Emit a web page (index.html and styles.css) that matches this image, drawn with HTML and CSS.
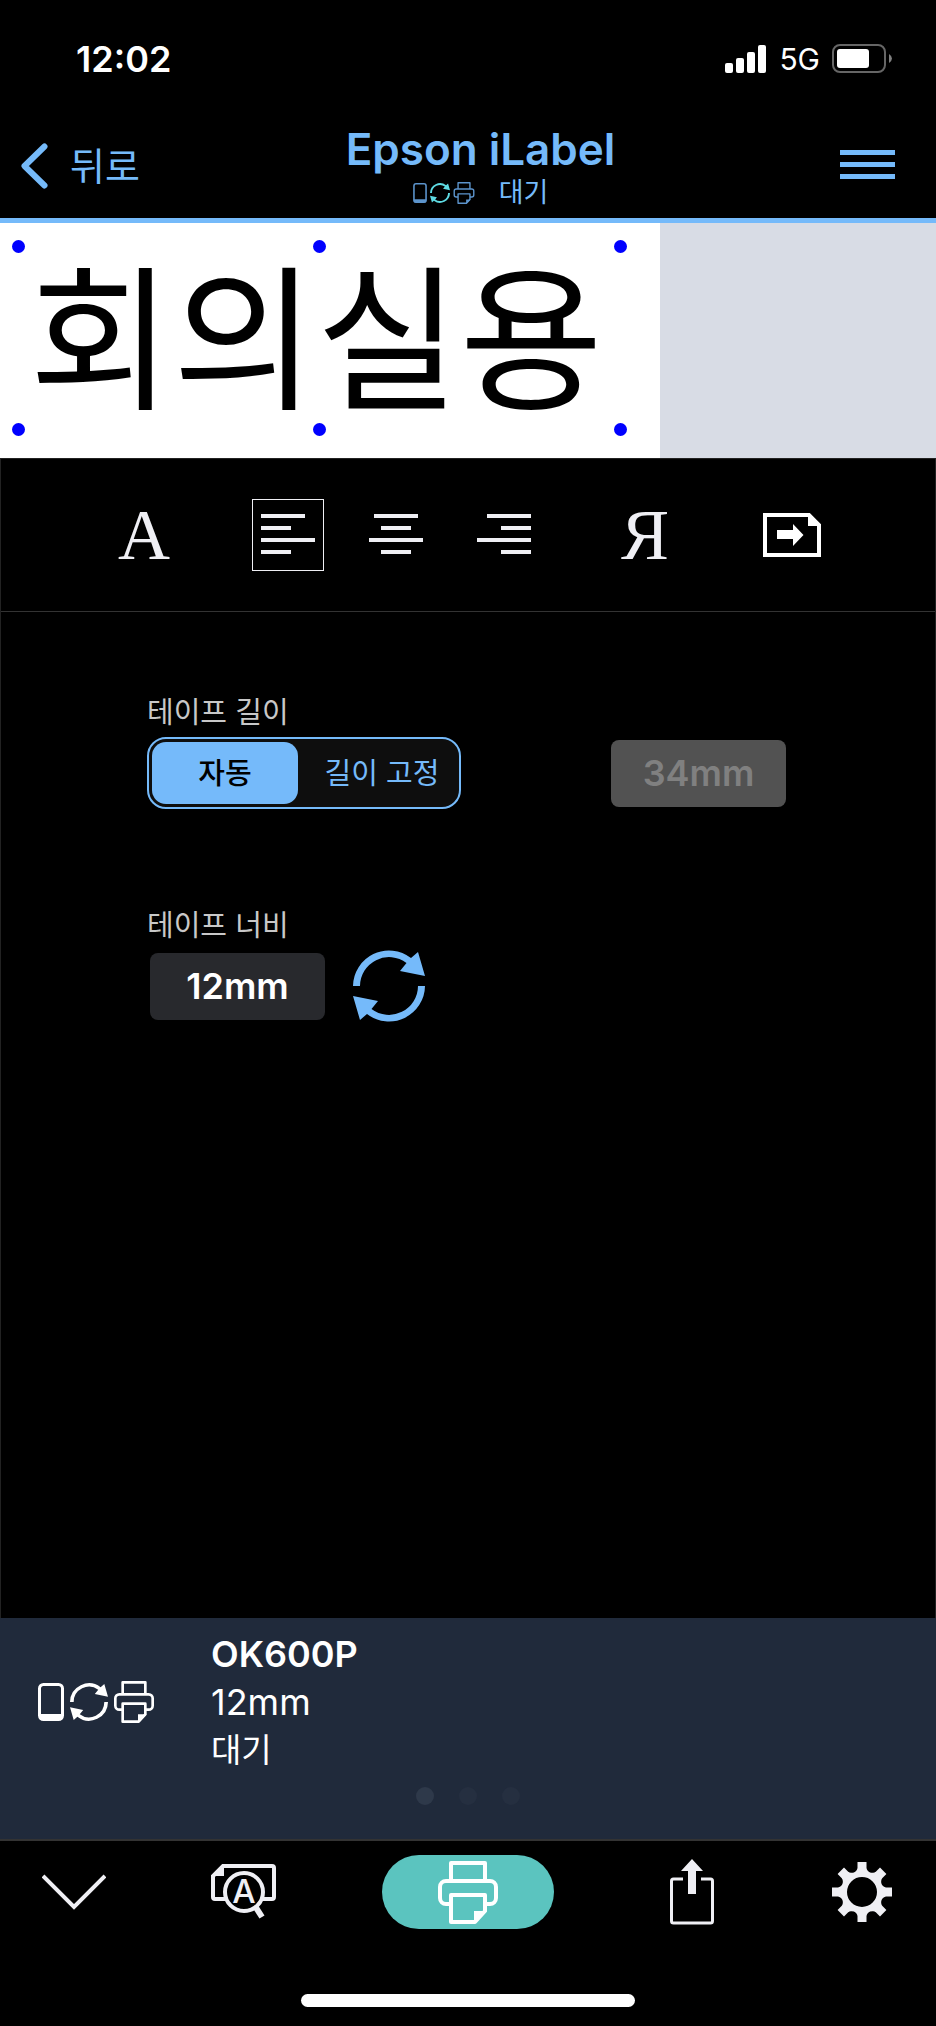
FILE: index.html
```html
<!DOCTYPE html>
<html lang="ko">
<head>
<meta charset="utf-8">
<meta name="viewport" content="width=device-width, initial-scale=1">
<title>Epson iLabel</title>
<link rel="stylesheet" href="styles.css">
</head>
<body>
<svg class="defs" aria-hidden="true">
  <symbol id="sync" viewBox="0 0 72 72">
    <path fill="currentColor" d="M0 36A36 36 0 0 1 58 8L65 2L72 26L47 21L53.5 13A29 29 0 0 0 7 36Z"/>
    <path fill="currentColor" transform="rotate(180 36 36)" d="M0 36A36 36 0 0 1 58 8L65 2L72 26L47 21L53.5 13A29 29 0 0 0 7 36Z"/>
  </symbol>
  <symbol id="printer" viewBox="0 0 60 63">
    <g fill="none" stroke="currentColor" stroke-width="4" stroke-linejoin="round">
      <path d="M13 20V2H47V20"/>
      <path d="M13 43H8a6 6 0 0 1-6-6V26a6 6 0 0 1 6-6H52a6 6 0 0 1 6 6V37a6 6 0 0 1-6 6H47"/>
      <path d="M13 34H47V50L37 61H13Z"/>
    </g>
    <path fill="currentColor" d="M36 50H49L36 63Z"/>
  </symbol>
  <symbol id="phone" viewBox="0 0 26 38">
    <rect x="1.500" y="1.500" width="23" height="35" rx="4" fill="none" stroke="currentColor" stroke-width="3"/>
    <path fill="currentColor" d="M1 31H25V34Q25 37 22 37H4Q1 37 1 34Z"/>
  </symbol>
</svg>
<div class="app">
  <header class="header">
    <div class="status">
      <time class="clock">12:02</time>
      <div class="status-right">
        <svg width="42" height="28" viewBox="0 0 42 28" fill="#fff" role="img" aria-label="signal"><rect x="0" y="18" width="8" height="10" rx="2"/><rect x="11" y="13" width="8" height="15" rx="2"/><rect x="22" y="7" width="8" height="21" rx="2"/><rect x="33" y="0" width="8" height="28" rx="2"/></svg>
        <span class="network">5G</span>
        <svg width="60" height="30" viewBox="0 0 60 30" role="img" aria-label="battery"><rect x="1" y="1" width="52" height="27" rx="7" fill="none" stroke="#666" stroke-width="2"/><rect x="5" y="5" width="32" height="19" rx="3" fill="#fff"/><path d="M57 10Q60 12 60 14.500Q60 17 57 19Z" fill="#808080"/></svg>
      </div>
    </div>
    <nav class="nav">
      <a class="back" href="#"><svg width="27" height="46" viewBox="0 0 27 46" fill="none" stroke="currentColor" stroke-width="6" stroke-linecap="round" stroke-linejoin="round" aria-hidden="true"><path d="M23.500 3.500L3.500 23L23.500 42.500"/></svg><span class="back-text">뒤로</span></a>
      <div class="heading">
        <h1 class="title">Epson iLabel</h1>
        <div class="substatus">
          <span class="link-icons"><svg class="phone"><use href="#phone"/></svg><svg class="sync"><use href="#sync"/></svg><svg class="printer"><use href="#printer"/></svg></span>
          <span>대기</span>
        </div>
      </div>
      <button class="menu" aria-label="메뉴"><svg width="55" height="30" viewBox="0 0 55 30" fill="currentColor"><rect width="55" height="5"/><rect y="12" width="55" height="5"/><rect y="24" width="55" height="5"/></svg></button>
    </nav>
  </header>

  <section class="preview">
    <div class="label">
      <span class="label-text">회의실용</span>
      <i class="handle top start"></i><i class="handle top middle"></i><i class="handle top end"></i>
      <i class="handle bottom start"></i><i class="handle bottom middle"></i><i class="handle bottom end"></i>
    </div>
  </section>

  <main class="editor">
    <div class="toolbar">
      <button class="tool letter">A</button>
      <button class="tool active" aria-label="왼쪽 정렬" aria-pressed="true"><svg width="54" height="42" viewBox="0 0 54 42" fill="currentColor"><rect width="44" height="4"/><rect y="12" width="30" height="4"/><rect y="24" width="54" height="4"/><rect y="36" width="30" height="4"/></svg></button>
      <button class="tool" aria-label="가운데 정렬"><svg width="54" height="42" viewBox="0 0 54 42" fill="currentColor"><rect x="5" width="44" height="4"/><rect x="12" y="12" width="30" height="4"/><rect y="24" width="54" height="4"/><rect x="12" y="36" width="30" height="4"/></svg></button>
      <button class="tool" aria-label="오른쪽 정렬"><svg width="54" height="42" viewBox="0 0 54 42" fill="currentColor"><rect x="10" width="44" height="4"/><rect x="24" y="12" width="30" height="4"/><rect y="24" width="54" height="4"/><rect x="24" y="36" width="30" height="4"/></svg></button>
      <button class="tool letter">Я</button>
      <button class="tool" aria-label="여백"><svg width="58" height="44" viewBox="0 0 58 44"><path fill="none" stroke="#fff" stroke-width="4" d="M2 2H46L56 12V42H2Z"/><path fill="#fff" d="M45 1L57 13H45ZM14 17H30V11L40.500 22L30 33V26H14Z"/></svg></button>
    </div>

    <div class="settings">
      <div class="field" role="group" aria-labelledby="length-caption">
        <span class="caption" id="length-caption">테이프 길이</span>
        <div class="row">
          <div class="segmented">
            <label class="segment auto"><input type="radio" name="length" checked>자동</label>
            <label class="segment fixed"><input type="radio" name="length">길이 고정</label>
          </div>
          <button class="value" disabled>34mm</button>
        </div>
      </div>
      <div class="field" role="group" aria-labelledby="width-caption">
        <span class="caption" id="width-caption">테이프 너비</span>
        <div class="row width-row">
          <button class="value">12mm</button>
          <button class="refresh" aria-label="새로 고침"><svg width="72" height="72"><use href="#sync"/></svg></button>
        </div>
      </div>
    </div>
  </main>

  <section class="device">
    <div class="device-info">
      <span class="link-icons large"><svg class="phone"><use href="#phone"/></svg><svg class="sync"><use href="#sync"/></svg><svg class="printer"><use href="#printer"/></svg></span>
      <div class="device-text">
        <strong>OK600P</strong>
        <span>12mm</span>
        <span class="state">대기</span>
      </div>
    </div>
    <div class="pages"><i class="page current"></i><i class="page"></i><i class="page"></i></div>
  </section>

  <footer class="footer">
    <div class="actions">
      <button class="action" aria-label="닫기"><svg width="64" height="36" viewBox="0 0 64 36" fill="none" stroke="currentColor" stroke-width="4"><path d="M1 2L32 33L63 2"/></svg></button>
      <button class="action" aria-label="미리보기"><svg width="65" height="56" viewBox="0 0 65 56"><path fill="none" stroke="currentColor" stroke-width="4" d="M20 35H4Q2 35 2 33V12L12 2H61Q63 2 63 4V33Q63 35 61 35H48"/><path fill="currentColor" d="M1 12L12 1H13V12Z"/><path stroke="currentColor" stroke-width="6" d="M44 42L51 53"/><circle cx="33" cy="28" r="19" fill="#000" stroke="currentColor" stroke-width="4"/><text class="lens-letter" x="33" y="39" text-anchor="middle" fill="currentColor">A</text></svg></button>
      <button class="action print" aria-label="인쇄"><svg width="60" height="63"><use href="#printer"/></svg></button>
      <button class="action" aria-label="공유"><svg width="44" height="66" viewBox="0 0 44 66"><path fill="none" stroke="currentColor" stroke-width="3" d="M13 20H3.500Q1.500 20 1.500 22V62Q1.500 64 3.500 64H40.500Q42.500 64 42.500 62V22Q42.500 20 40.500 20H31"/><path fill="currentColor" d="M22 0L33 12H26V35H18V12H11Z"/></svg></button>
      <button class="action" aria-label="설정"><svg width="60" height="60" viewBox="-30 -30 60 60"><path fill="currentColor" fill-rule="evenodd" d="M-4.500-24V-30H4.500V-24A6 6 0 0 0 13.800-20.200L18-24.400L24.400-18L20.200-13.800A6 6 0 0 0 24-4.500H30V4.500H24A6 6 0 0 0 20.200 13.800L24.400 18L18 24.400L13.800 20.200A6 6 0 0 0 4.500 24V30H-4.500V24A6 6 0 0 0-13.800 20.200L-18 24.400L-24.400 18L-20.200 13.800A6 6 0 0 0-24 4.500H-30V-4.500H-24A6 6 0 0 0-20.200-13.800L-24.400-18L-18-24.400L-13.800-20.200A6 6 0 0 0-4.500-24ZM15 0A15 15 0 1 0-15 0A15 15 0 1 0 15 0Z"/></svg></button>
    </div>
    <div class="home-bar"></div>
  </footer>
</div>
</body>
</html>
```
FILE: styles.css
```css
* { box-sizing: border-box; }

body {
  margin: 0;
  background: #000;
  color: #fff;
  font-family: Inter, "Noto Sans CJK KR", sans-serif;
}

button {
  margin: 0;
  padding: 0;
  border: 0;
  background: none;
  color: inherit;
  font: inherit;
}

svg { display: block; flex: none; }

.defs { position: absolute; width: 0; height: 0; }

.app {
  display: flex;
  flex-direction: column;
  min-height: 100vh;
}

/* Header */
.header { border-bottom: 5px solid #75bafa; color: #75bafa; }

.status {
  display: flex;
  justify-content: space-between;
  align-items: center;
  height: 118px;
  padding: 0 44px 0 76px;
  color: #fff;
}

.clock { font-size: 36px; font-weight: 600; }

.status-right { display: flex; align-items: center; gap: 12px; }

.network { font-size: 30px; font-weight: 400; }

.nav {
  display: grid;
  grid-template-columns: 1fr auto 1fr;
  height: 100px;
  padding: 0 41px 0 21px;
}

.back {
  display: flex;
  align-items: center;
  gap: 22px;
  height: 96px;
  color: inherit;
  font-size: 38px;
  text-decoration: none;
}

.back-text { padding-bottom: 6px; }

.heading { padding: 4px 0 0 45px; text-align: center; }

.title {
  margin: 0;
  font-size: 44px;
  font-weight: 600;
  line-height: 54px;
}

.substatus {
  display: flex;
  justify-content: center;
  align-items: center;
  gap: 24px;
  padding-top: 1px;
  font-size: 27px;
  line-height: 32px;
}

.link-icons { display: flex; align-items: center; gap: 3px; }
.phone { width: 14px; height: 20px; color: #5c94cc; }
.sync { width: 20px; height: 20px; color: #5edbe3; }
.printer { width: 22px; height: 22px; color: #5c94cc; }

.large { gap: 6px; }
.large .phone { width: 26px; height: 38px; color: #fff; }
.large .sync { width: 38px; height: 38px; color: #fff; }
.large .printer { width: 40px; height: 42px; color: #fff; }

.menu { justify-self: end; height: 94px; }

/* Label preview */
.preview { background: #d8dce5; color: #000; }

.label {
  position: relative;
  display: flex;
  align-items: center;
  width: 660px;
  height: 235px;
  padding: 0 0 22px 29px;
  background: #fff;
}

.label-text {
  font-family: "Noto Sans CJK KR", sans-serif;
  font-size: 156px;
  line-height: 213px;
  white-space: nowrap;
}

.handle {
  position: absolute;
  width: 13px;
  height: 13px;
  border-radius: 50%;
  background: #00f;
}

.top { top: 17px; }
.bottom { bottom: 22px; }
.start { left: 12px; }
.middle { left: 313px; }
.end { left: 614px; }

/* Editor */
.editor {
  flex: 1;
  border: 1px solid #222;
  border-bottom: 0;
}

.toolbar {
  display: grid;
  grid-template-columns: 144fr 144fr 72fr 144fr 138fr 156fr;
  place-items: center;
  height: 153px;
  padding: 0 65px 0 71px;
  border-bottom: 1px solid #333;
  color: #efeff4;
}

.tool {
  display: flex;
  justify-content: center;
  align-items: center;
  width: 72px;
  height: 72px;
}

.active { border: 1px solid #efeff4; }

.letter {
  font-family: "Liberation Serif", serif;
  font-size: 72px;
  line-height: 72px;
}

.settings {
  display: flex;
  flex-direction: column;
  gap: 97px;
  padding: 81px 149px 0 146px;
}

.field { display: flex; flex-direction: column; gap: 4px; }

.caption { color: #c8c8c8; font-size: 29px; line-height: 40px; }

.row {
  display: flex;
  justify-content: space-between;
  align-items: center;
}

.width-row { justify-content: flex-start; gap: 28px; padding-left: 3px; }

.segmented {
  display: grid;
  grid-template-columns: 147fr 159fr;
  width: 314px;
  height: 72px;
  padding: 3px;
  border: 2px solid #75bafa;
  border-radius: 19px;
  background: #0e0e0e;
}

.segment {
  position: relative;
  display: flex;
  justify-content: center;
  align-items: center;
  padding-bottom: 4px;
  border-radius: 14px;
  font-size: 29px;
}

.segment input {
  position: absolute;
  inset: 0;
  margin: 0;
  opacity: 0;
}

.auto { background: #75bafa; color: #000; font-weight: 500; }
.fixed { padding-left: 10px; color: #75bafa; }

.value {
  width: 175px;
  height: 67px;
  border-radius: 8px;
  background: #28292d;
  color: #fff;
  font-size: 36px;
  font-weight: 600;
}

.value:disabled { background: #525252; color: #808080; }

.refresh { color: #75bafa; }

/* Connected printer */
.device {
  display: flex;
  flex-direction: column;
  height: 223px;
  border-bottom: 2px solid #333;
  background: #202a3b;
}

.device-info {
  display: flex;
  align-items: center;
  gap: 57px;
  padding: 12px 38px 0;
}

.device-text { display: flex; flex-direction: column; font-size: 36px; line-height: 48px; }
.device-text strong { font-weight: 600; }
.state { font-size: 33px; }

.pages {
  display: flex;
  justify-content: center;
  gap: 25px;
  padding-top: 13px;
}

.page { width: 18px; height: 18px; border-radius: 50%; background: #252f40; }
.current { background: #2e394a; }

/* Bottom bar */
.footer {
  display: flex;
  flex-direction: column;
  align-items: center;
  gap: 65px;
  padding: 14px 0 19px;
  color: #efeff4;
}

.actions {
  display: grid;
  grid-template-columns: 148fr 191fr 258fr 190fr 149fr;
  place-items: center;
  width: 100%;
}

.print {
  display: flex;
  justify-content: center;
  align-items: center;
  width: 172px;
  height: 74px;
  border-radius: 37px;
  background: #5bc4bf;
  color: #fff;
}

.lens-letter { font-family: Inter, sans-serif; font-size: 33px; font-weight: 500; }

.home-bar { width: 334px; height: 13px; border-radius: 7px; background: #fff; }
```
